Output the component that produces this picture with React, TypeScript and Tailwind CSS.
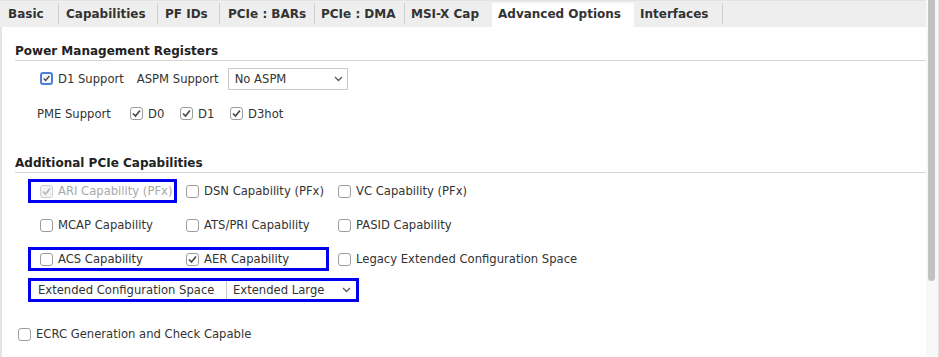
import React from 'react';

const tabs = [
  { label: 'Basic', w: 'w-[58px]', pl: 'pl-[8px]', sep: true },
  { label: 'Capabilities', w: 'w-[98px]', pl: 'pl-[7px]', sep: true },
  { label: 'PF IDs', w: 'w-[61px]', pl: 'pl-[7px]', sep: true },
  { label: 'PCIe : BARs', w: 'w-[94px]', pl: 'pl-[8px]', sep: true },
  { label: 'PCIe : DMA', w: 'w-[89px]', pl: 'pl-[6px]', sep: true },
  { label: 'MSI-X Cap', w: 'w-[87px]', pl: 'pl-[6px]', sep: false },
];

const Chevron = () => (
  <svg width="9" height="6" viewBox="0 0 9 6" className="shrink-0">
    <polyline points="1,1 4.5,4.5 8,1" fill="none" stroke="#5a5a5a" strokeWidth="1.3" />
  </svg>
);

const Checkbox: React.FC<{ checked?: boolean; disabled?: boolean; focused?: boolean }> = ({ checked, disabled, focused }) => {
  const box = focused
    ? 'border-2 border-[#4d7fd6] bg-[#f4f7fd]'
    : disabled
      ? 'border border-[#cfcfcf] bg-[#f3f3f3]'
      : 'border border-[#9c9c9c] bg-white';
  return (
    <span className={`flex h-[13px] w-[13px] shrink-0 items-center justify-center rounded-[3px] ${box}`}>
      {checked && (
        <svg width="11" height="11" viewBox="0 0 11 11">
          <polyline
            points="2,5.5 4.5,8 9,2.5"
            fill="none"
            stroke={disabled ? '#b8b8b8' : '#4a4a4a'}
            strokeWidth="1.7"
          />
        </svg>
      )}
    </span>
  );
};

const Check: React.FC<{ label: string; checked?: boolean; disabled?: boolean; focused?: boolean; className?: string }> = ({
  label,
  checked,
  disabled,
  focused,
  className = '',
}) => (
  <div className={`flex items-center gap-[5px] ${className}`}>
    <Checkbox checked={checked} disabled={disabled} focused={focused} />
    <span className={`whitespace-nowrap pt-[1px] ${disabled ? 'text-[#a9a9a9]' : 'text-[#333333]'}`}>{label}</span>
  </div>
);

const SectionHeader: React.FC<{ title: string; className?: string }> = ({ title, className = '' }) => (
  <div className={`border-b border-[#d4d4d4] pb-[1px] text-[12px] font-bold leading-[16px] text-[#222222] ${className}`}>{title}</div>
);

export default function App() {
  return (
    <div className="flex h-[357px] w-[939px] overflow-hidden bg-white font-['DejaVu_Sans',sans-serif] text-[11.6px]">
      <div className="flex w-[926px] flex-col">
        {/* Tab bar */}
        <div className="flex h-[27px] shrink-0 items-stretch border-t border-[#e2e2e2] bg-[#eeeeee] text-[12px] font-bold text-[#333333]">
          {tabs.map((t) => (
            <React.Fragment key={t.label}>
              <div className={`flex items-center whitespace-nowrap ${t.w} ${t.pl}`}>{t.label}</div>
              {t.sep && <span className="mt-[2px] h-[21px] w-px bg-[#cfcfcf]" />}
            </React.Fragment>
          ))}
          <div className="mt-[2px] flex w-[142px] items-center bg-white pb-[2px] pl-[6px] whitespace-nowrap">Advanced Options</div>
          <div className="flex w-[88px] items-center pl-[6px] whitespace-nowrap">Interfaces</div>
          <span className="mt-[2px] h-[21px] w-px bg-[#cfcfcf]" />
        </div>

        {/* Content */}
        <div className="flex-1 border-l-2 border-[#e4e4e4] pl-[13px]">
          <SectionHeader title="Power Management Registers" className="mt-[16px]" />

          <div className="mt-[7px] flex h-[22px] items-center pl-[25px]">
            <Check label="D1 Support" checked focused />
            <span className="ml-[13px] pt-[1px] text-[#333333]">ASPM Support</span>
            <div className="ml-[9px] flex h-[22px] w-[120px] items-center justify-between border border-[#c9c9c9] pl-[6px] pr-[4px] text-[#333333]">
              <span className="pt-[1px]">No ASPM</span>
              <Chevron />
            </div>
          </div>

          <div className="mt-[13px] flex h-[22px] items-center pl-[22px]">
            <span className="w-[93px] pt-[1px] text-[#333333]">PME Support</span>
            <Check label="D0" checked className="w-[50px]" />
            <Check label="D1" checked className="w-[50px]" />
            <Check label="D3hot" checked />
          </div>

          <SectionHeader title="Additional PCIe Capabilities" className="mt-[30px]" />

          {/* Capability grid */}
          <div className="mt-[6px] flex h-[24px] items-stretch pl-[13px]">
            <div className="flex w-[149px] items-center border-[3px] border-[#0000ee] pl-[9px]">
              <Check label="ARI Capability (PFx)" checked disabled />
            </div>
            <Check label="DSN Capability (PFx)" className="ml-[9px] w-[152px]" />
            <Check label="VC Capability (PFx)" />
          </div>

          <div className="mt-[10px] flex h-[24px] items-stretch pl-[13px]">
            <div className="flex w-[149px] items-center border-[3px] border-transparent pl-[9px]">
              <Check label="MCAP Capability" />
            </div>
            <Check label="ATS/PRI Capability" className="ml-[9px] w-[152px]" />
            <Check label="PASID Capability" />
          </div>

          <div className="mt-[10px] flex h-[24px] items-stretch pl-[13px]">
            <div className="flex w-[301px] items-center border-[3px] border-[#0000ee] pl-[9px]">
              <Check label="ACS Capability" className="w-[146px]" />
              <Check label="AER Capability" checked />
            </div>
            <Check label="Legacy Extended Configuration Space" className="ml-[9px]" />
          </div>

          <div className="mt-[7px] flex h-[24px] pl-[13px]">
            <div className="flex w-[331px] items-stretch border-[3px] border-[#0000ee] text-[#333333]">
              <span className="flex w-[195px] items-center pl-[7px] pt-[1px] whitespace-nowrap">Extended Configuration Space</span>
              <div className="flex flex-1 items-center justify-between border-l border-[#c9c9c9] pl-[6px] pr-[5px]">
                <span className="pt-[1px] whitespace-nowrap">Extended Large</span>
                <Chevron />
              </div>
            </div>
          </div>

          <div className="mt-[24px] flex h-[16px] items-center pl-[3px]">
            <Check label="ECRC Generation and Check Capable" />
          </div>
        </div>
      </div>

      {/* Scrollbar */}
      <div className="w-[13px] border-r border-[#e2e2e2] bg-[#f8f8f8] pl-[2px]">
        <div className="h-[281px] w-[7px] rounded-b-[4px] bg-[#c2c2c2]" />
      </div>
    </div>
  );
}
